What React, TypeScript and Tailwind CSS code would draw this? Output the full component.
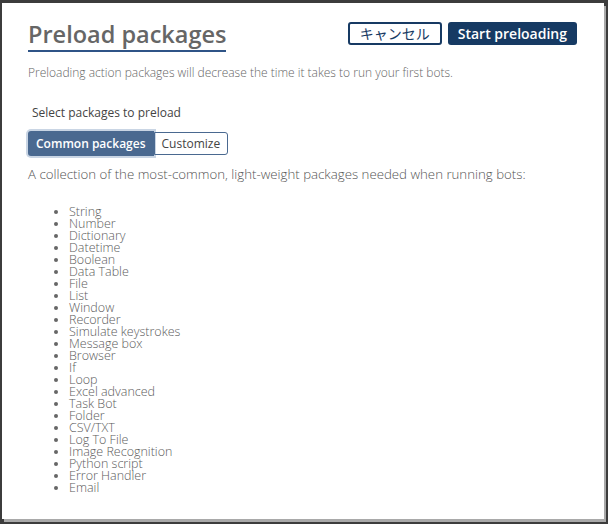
import React, { useState } from 'react';

const packages = [
    'String',
    'Number',
    'Dictionary',
    'Datetime',
    'Boolean',
    'Data Table',
    'File',
    'List',
    'Window',
    'Recorder',
    'Simulate keystrokes',
    'Message box',
    'Browser',
    'If',
    'Loop',
    'Excel advanced',
    'Task Bot',
    'Folder',
    'CSV/TXT',
    'Log To File',
    'Image Recognition',
    'Python script',
    'Error Handler',
    'Email',
];

const App: React.FC = () => {
    const [mode, setMode] = useState<'common' | 'custom'>('common');

    return (
        <div className="w-[608px] h-[524px] bg-[#3c3c3c] overflow-hidden font-['Open_Sans','Noto_Sans_CJK_JP',sans-serif]">
            <div className="ml-[2px] mt-[3px] w-[602px] h-[516px] bg-white shadow-[2px_3px_0_0_#a9a9a9] px-[26px] pt-[18px]">
                <div className="flex items-start justify-between">
                    <h1 className="text-[23.5px] leading-[27px] font-semibold text-[#666] border-b-2 border-[#2f5487] pb-[2px]">
                        Preload packages
                    </h1>
                    <div className="flex gap-[6px] mr-[1px] mt-[1px]">
                        <button className="h-[23px] px-[10px] border-2 border-[#173a63] rounded-[3px] text-[#173a63] text-[14px] leading-[19px] bg-white">
                            キャンセル
                        </button>
                        <button className="h-[23px] px-[10px] rounded-[3px] bg-[#163a63] text-white text-[14px] leading-[23px] font-semibold">
                            Start preloading
                        </button>
                    </div>
                </div>

                <p className="mt-[13px] text-[12px] leading-[16px] font-light text-[#666]">
                    Preloading action packages will decrease the time it takes to run your first bots.
                </p>

                <p className="mt-[24px] ml-[4px] text-[12px] leading-[16px] text-[#444]">Select packages to preload</p>

                <div className="mt-[10px] flex">
                    <button
                        onClick={() => setMode('common')}
                        className={
                            mode === 'common'
                                ? 'h-[25px] px-[8px] rounded-l-[3px] bg-[#4a6990] text-white text-[12px] font-semibold shadow-[0_0_0_2px_#c9d5e4]'
                                : 'h-[25px] px-[8px] rounded-l-[3px] border border-[#4a6990] text-[#444] text-[12px]'
                        }
                    >
                        Common packages
                    </button>
                    <button
                        onClick={() => setMode('custom')}
                        className={
                            mode === 'custom'
                                ? 'h-[23px] mt-[1px] px-[7px] rounded-r-[3px] bg-[#4a6990] text-white text-[12px] font-semibold'
                                : 'h-[23px] mt-[1px] px-[7px] rounded-r-[3px] border border-[#4a6990] text-[#444] text-[12px]'
                        }
                    >
                        Customize
                    </button>
                </div>

                <p className="mt-[9px] text-[13.25px] leading-[18px] font-light text-[#555]">
                    A collection of the most-common, light-weight packages needed when running bots:
                </p>

                <ul className="mt-[23px] ml-[29px] list-disc text-[12.5px] leading-[12px] font-light text-[#5c5c5c] marker:text-[#666] pl-[12px]">
                    {packages.map((p) => (
                        <li key={p}>{p}</li>
                    ))}
                </ul>
            </div>
        </div>
    );
};

export default App;
